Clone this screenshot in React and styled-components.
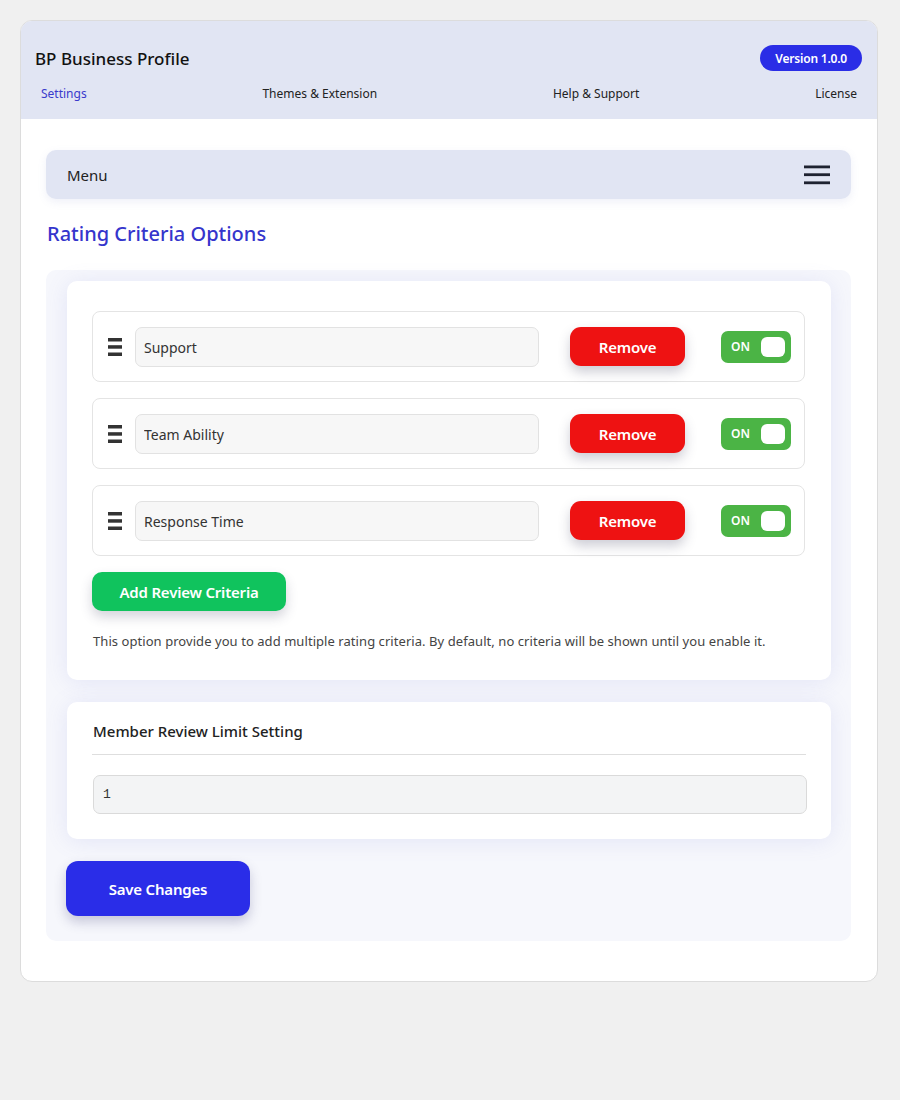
import React from "react";
import styled, { createGlobalStyle } from "styled-components";

const GlobalStyle = createGlobalStyle`
  html, body { margin: 0; padding: 0; background: #f0f0f0; }
  body { font-family: "Noto Sans", "Open Sans", Arial, sans-serif; color: #222; }
  * { box-sizing: border-box; }
`;

const Page = styled.div`
  padding: 20px 22px 40px 20px;
`;

const Shell = styled.div`
  width: 858px;
  background: #fff;
  border: 1px solid #dcdcdc;
  border-radius: 12px;
  overflow: hidden;
`;

const Header = styled.header`
  background: #e1e5f3;
  padding: 24px 15px 17px 14px;
`;

const TitleRow = styled.div`
  display: flex;
  align-items: center;
  justify-content: space-between;
  height: 26px;
`;

const Brand = styled.h1`
  margin: 0;
  font-size: 17px;
  font-weight: 500;
  color: #111;
`;

const Badge = styled.span`
  background: #2a2de6;
  color: #fff;
  font-size: 12px;
  font-weight: 600;
  height: 26px;
  padding: 0 15px;
  border-radius: 13px;
  display: inline-flex;
  align-items: center;
  letter-spacing: -0.2px;
`;

const Nav = styled.nav`
  margin-top: 15px;
  padding: 0 5px 0 6px;
  display: flex;
  justify-content: space-between;
  line-height: 16px;
`;

const NavLink = styled.a`
  font-size: 12px;
  color: ${(p) => (p.$active ? "#3a3acc" : "#222")};
  text-decoration: none;
`;

const Body = styled.main`
  padding: 31px 26px 40px 25px;
`;

const MenuBar = styled.div`
  height: 49px;
  background: #e1e5f3;
  border-radius: 10px;
  display: flex;
  align-items: center;
  justify-content: space-between;
  padding: 0 21px 0 21px;
  box-shadow: 0 3px 8px rgba(120, 130, 200, 0.12);
`;

const MenuLabel = styled.span`
  font-size: 15px;
  color: #222;
`;

const SectionTitle = styled.h2`
  margin: 21px 0 22px 1px;
  font-size: 20px;
  line-height: 28px;
  font-weight: 500;
  color: #3535cc;
`;

const Panel = styled.div`
  background: #f6f7fc;
  border-radius: 10px;
  padding: 11px 20px 25px 21px;
  display: flex;
  flex-direction: column;
  align-items: flex-start;
  gap: 22px;
`;

const Card = styled.section`
  align-self: stretch;
  background: #fff;
  border-radius: 10px;
  padding: ${(p) => p.$pad};
  box-shadow: 0 2px 22px rgba(110, 120, 210, 0.14);
`;

const RowList = styled.div`
  display: flex;
  flex-direction: column;
  gap: 16px;
`;

const Row = styled.div`
  height: 71px;
  border: 1px solid #e4e4e4;
  border-radius: 8px;
  display: flex;
  align-items: center;
  padding: 0 13px 0 15px;
`;

const Handle = styled.svg`
  width: 14px;
  height: 18px;
  flex: none;
  margin: 1px 13px 0 0;
`;

const TextInput = styled.input`
  flex: 1;
  min-width: 0;
  height: 40px;
  background: #f7f7f7;
  border: 1px solid #e2e2e2;
  border-radius: 7px;
  padding: 0 8px;
  font-family: inherit;
  font-size: 14px;
  color: #333;
  outline: none;
  margin-top: 1px;
`;

const Button = styled.button`
  border: none;
  color: #fff;
  font-family: inherit;
  font-weight: 600;
  font-size: 15px;
  letter-spacing: -0.2px;
  cursor: pointer;
  background: ${(p) => p.$bg};
  width: ${(p) => p.$w};
  height: ${(p) => p.$h};
  border-radius: ${(p) => p.$r || "10px"};
  box-shadow: 0 6px 12px ${(p) => p.$shadow};
  flex: none;
`;

const RemoveButton = styled(Button)`
  margin-left: 31px;
`;

const SaveButton = styled(Button)`
  margin-left: -1px;
`;

const Toggle = styled.div`
  flex: none;
  margin-left: 36px;
  width: 70px;
  height: 32px;
  background: #4bb445;
  border-radius: 7px;
  display: flex;
  align-items: center;
  justify-content: space-between;
  padding: 0 6px 0 10px;
`;

const ToggleText = styled.span`
  color: #fff;
  font-size: 12px;
  font-weight: 600;
`;

const Knob = styled.span`
  width: 24px;
  height: 20px;
  background: #fff;
  border-radius: 6px;
`;

const AddWrap = styled.div`
  margin-top: 16px;
`;

const Help = styled.p`
  margin: 20px 0 0 1px;
  font-size: 13px;
  line-height: 20px;
  letter-spacing: 0.06px;
  color: #444;
`;

const CardTitle = styled.h3`
  margin: 0 0 0 1px;
  font-size: 15px;
  line-height: 22px;
  font-weight: 500;
  color: #222;
`;

const Divider = styled.hr`
  margin: 12px 0 20px;
  border: none;
  border-top: 1px solid #dedede;
`;

const NumberInput = styled.input`
  width: 100%;
  height: 39px;
  margin-left: 1px;
  background: #f3f4f5;
  border: 1px solid #dadada;
  border-radius: 7px;
  padding: 0 9px;
  font-family: "Liberation Mono", "DejaVu Sans Mono", monospace;
  font-size: 13px;
  color: #333;
  outline: none;
`;

const criteria = ["Support", "Team Ability", "Response Time"];

const HandleIcon = () => (
  <Handle viewBox="0 0 14 18">
    <rect x="0" y="0" width="14" height="3.5" fill="#333" />
    <rect x="0" y="7.2" width="14" height="3.5" fill="#333" />
    <rect x="0" y="14.5" width="14" height="3.5" fill="#333" />
  </Handle>
);

const Hamburger = () => (
  <svg width="26" height="20" viewBox="0 0 26 20">
    <rect x="0" y="0.5" width="26" height="2.8" fill="#1e2230" />
    <rect x="0" y="8.3" width="26" height="2.8" fill="#1e2230" />
    <rect x="0" y="16.4" width="26" height="2.8" fill="#1e2230" />
  </svg>
);

export default function App() {
  return (
    <>
      <GlobalStyle />
      <Page>
        <Shell>
          <Header>
            <TitleRow>
              <Brand>BP Business Profile</Brand>
              <Badge>Version 1.0.0</Badge>
            </TitleRow>
            <Nav>
              <NavLink $active>Settings</NavLink>
              <NavLink>Themes &amp; Extension</NavLink>
              <NavLink>Help &amp; Support</NavLink>
              <NavLink>License</NavLink>
            </Nav>
          </Header>
          <Body>
            <MenuBar>
              <MenuLabel>Menu</MenuLabel>
              <Hamburger />
            </MenuBar>
            <SectionTitle>Rating Criteria Options</SectionTitle>
            <Panel>
              <Card $pad="30px 26px 29px 25px">
                <RowList>
                  {criteria.map((c) => (
                    <Row key={c}>
                      <HandleIcon />
                      <TextInput defaultValue={c} />
                      <RemoveButton
                        $bg="#ee1212"
                        $w="115px"
                        $h="39px"
                        $r="11px"
                        $shadow="rgba(60, 60, 90, 0.25)"
                      >
                        Remove
                      </RemoveButton>
                      <Toggle>
                        <ToggleText>ON</ToggleText>
                        <Knob />
                      </Toggle>
                    </Row>
                  ))}
                </RowList>
                <AddWrap>
                  <Button
                    $bg="#10c35d"
                    $w="194px"
                    $h="39px"
                    $shadow="rgba(60, 60, 90, 0.22)"
                  >
                    Add Review Criteria
                  </Button>
                </AddWrap>
                <Help>
                  This option provide you to add multiple rating criteria. By default, no criteria
                  will be shown until you enable it.
                </Help>
              </Card>
              <Card $pad="18px 25px 25px 25px">
                <CardTitle>Member Review Limit Setting</CardTitle>
                <Divider />
                <NumberInput defaultValue="1" />
              </Card>
              <SaveButton
                $bg="#2a2de8"
                $w="184px"
                $h="55px"
                $r="12px"
                $shadow="rgba(60, 60, 120, 0.25)"
              >
                Save Changes
              </SaveButton>
            </Panel>
          </Body>
        </Shell>
      </Page>
    </>
  );
}
